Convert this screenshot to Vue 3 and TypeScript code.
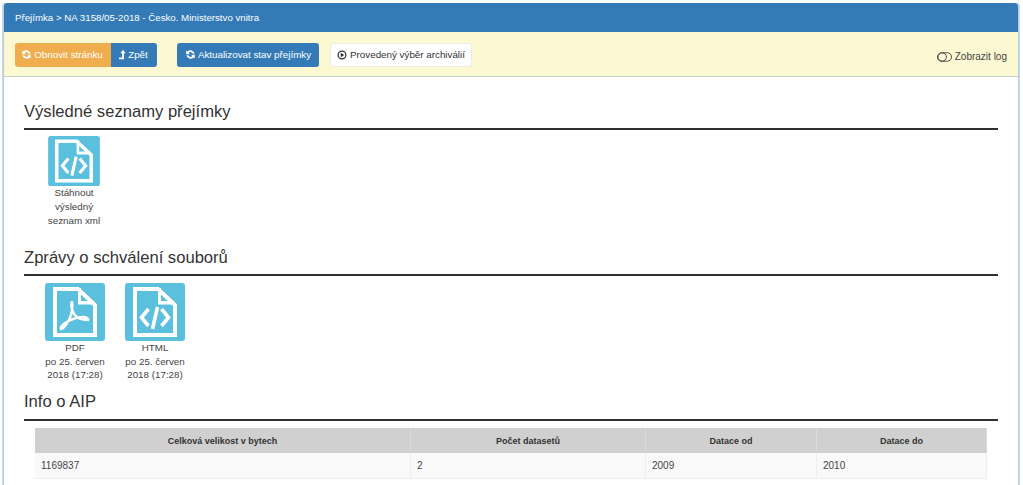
<template>
  <div class="page">
    <div class="panel">
      <div class="panel-head">Přejímka &gt; NA 3158/05-2018 - Česko. Ministerstvo vnitra</div>
      <div class="toolbar">
        <div class="btn-group">
          <button class="btn orange">
            <svg class="ico" viewBox="0 0 16 16"><path d="M14 6.800A6.200 6.200 0 0 0 3.500 3.800L1.800 2.200v5.400h5.400L5.300 5.700a3.700 3.700 0 0 1 6.100 1.100zM2 9.200a6.200 6.200 0 0 0 10.500 3l1.700 1.600V8.400H8.800l1.900 1.900a3.700 3.700 0 0 1-6.100-1.100z" fill="currentColor"/></svg>Obnovit stránku
          </button>
          <button class="btn blue back">
            <svg class="ico small" viewBox="0 0 12 16"><path d="M7.500 1 11.500 6H9v9H1.500v-2.400h4.600V6H3.500z" fill="currentColor"/></svg>Zpět
          </button>
        </div>
        <button class="btn blue update">
          <svg class="ico" viewBox="0 0 16 16"><path d="M14 6.800A6.200 6.200 0 0 0 3.500 3.800L1.800 2.200v5.400h5.400L5.300 5.700a3.700 3.700 0 0 1 6.100 1.100zM2 9.200a6.200 6.200 0 0 0 10.500 3l1.700 1.600V8.400H8.800l1.900 1.900a3.700 3.700 0 0 1-6.100-1.100z" fill="currentColor"/></svg>Aktualizovat stav přejímky
        </button>
        <button class="btn plain">
          <svg class="ico" viewBox="0 0 16 16"><circle cx="8" cy="8" r="6.200" fill="none" stroke="currentColor" stroke-width="2"/><path d="M6 4.500 11.500 8 6 11.500z" fill="currentColor"/></svg>Provedený výběr archiválií
        </button>
        <div class="log">
          <svg class="toggle" viewBox="0 0 16 10"><rect x=".5" y=".5" width="15" height="9" rx="4.500" fill="none" stroke="currentColor"/><circle cx="5.500" cy="5" r="4.500" fill="none" stroke="currentColor"/></svg>
          <span>Zobrazit log</span>
        </div>
      </div>

      <div class="content">
        <h3 class="first">Výsledné seznamy přejímky</h3>
        <div class="files one">
          <div v-for="f in resultFiles" :key="f.label" class="file small-file">
            <svg class="doc" viewBox="0 0 60 58">
              <rect width="60" height="58" rx="3" fill="#5bc0de"/>
              <path :d="sheet" fill="none" stroke="#fff" stroke-width="4"/>
              <path :d="fold" fill="#fff"/>
              <path :d="code" fill="none" stroke="#fff" stroke-width="3.600"/>
            </svg>
            <div class="label">{{ f.label }}</div>
          </div>
        </div>

        <h3>Zprávy o schválení souborů</h3>
        <div class="files two">
          <div v-for="f in reportFiles" :key="f.label" class="file">
            <svg class="doc" viewBox="0 0 60 58">
              <rect width="60" height="58" rx="3" fill="#5bc0de"/>
              <path :d="sheet" fill="none" stroke="#fff" stroke-width="4"/>
              <path :d="fold" fill="#fff"/>
              <path v-if="f.kind === 'html'" :d="code" fill="none" stroke="#fff" stroke-width="3.600"/>
              <path v-else d="M27 19c-2 1 0 8 2 12 3 4 9 6 14 6 1-1-1-3-5-3-6 0-13 3-18 6-3 2-5 5-4 6 3 0 8-8 10-14 1-5 2-12 1-13z" fill="none" stroke="#fff" stroke-width="2.400"/>
            </svg>
            <div class="label">{{ f.label }}<br />{{ f.date }}</div>
          </div>
        </div>

        <h3 class="aip">Info o AIP</h3>
        <table>
          <thead>
            <tr>
              <th v-for="c in columns" :key="c.title" :style="{ width: c.width + 'px' }">{{ c.title }}</th>
            </tr>
          </thead>
          <tbody>
            <tr>
              <td v-for="c in columns" :key="c.title">{{ c.value }}</td>
            </tr>
          </tbody>
        </table>
      </div>
    </div>
  </div>
</template>

<script setup lang="ts">
const sheet = 'M10 6h23l17 16v30H10z'
const fold = 'M33 5h3v13h13l2 3.500H33z'
const code = 'M23.500 26l-7 8.500 7 8.500M36.500 26l7 8.500-7 8.500M32.500 24l-5 22'

const resultFiles = [{ label: 'Stáhnout výsledný seznam xml' }]

const reportFiles = [
  { kind: 'pdf', label: 'PDF', date: 'po 25. červen 2018 (17:28)' },
  { kind: 'html', label: 'HTML', date: 'po 25. červen 2018 (17:28)' }
]

const columns = [
  { title: 'Celková velikost v bytech', value: '1169837', width: 375 },
  { title: 'Počet datasetů', value: '2', width: 234 },
  { title: 'Datace od', value: '2009', width: 170 },
  { title: 'Datace do', value: '2010', width: 169 }
]
</script>

<style>
html, body {
  background: #fff;
  overflow: hidden;
}
</style>

<style scoped>
.page {
  height: 485px;
  overflow: hidden;
  padding: 3px 4px 0 3px;
  box-sizing: border-box;
  font-family: "Liberation Sans", Arial, sans-serif;
  color: #333;
}

.panel {
  border: 1px solid #b4cde2;
  border-top: 0;
  border-radius: 3px 3px 0 0;
  height: 600px;
  box-shadow: -1px 0 0 #c9dcea, 1px 0 0 #c9dcea;
}

.panel-head {
  height: 29px;
  line-height: 29px;
  padding-left: 11px;
  background: #337ab7;
  color: #fff;
  font-size: 9.7px;
  border-radius: 3px 3px 0 0;
}

.toolbar {
  height: 45px;
  box-sizing: border-box;
  padding: 11px 11px 0;
  background: #fbf8d2;
  border-bottom: 1px solid #bfd3c8;
  display: flex;
  align-items: flex-start;
}

.btn-group {
  display: flex;
  margin-right: 20px;
}

.btn {
  height: 24px;
  border: 0;
  padding: 0 0 1px;
  font: 9.8px "Liberation Sans", Arial, sans-serif;
  display: flex;
  align-items: center;
  justify-content: center;
  color: #fff;
  border-radius: 3px;
}

.orange {
  width: 96px;
  padding-right: 2px;
  background: #f0ad4e;
  border-radius: 3px 0 0 3px;
}

.blue {
  background: #337ab7;
}

.back {
  width: 46px;
  padding-right: 2px;
  border-radius: 0 3px 3px 0;
}

.update {
  width: 142px;
  margin-right: 11px;
}

.plain {
  width: 142px;
  background: #fff;
  color: #333;
  border: 1px solid #ececec;
  box-sizing: border-box;
}

.ico {
  width: 11px;
  height: 11px;
  margin-right: 2px;
  flex: none;
}

.plain .ico {
  width: 10px;
  height: 10px;
  margin-right: 3px;
}

.ico.small {
  width: 8px;
}

.log {
  margin-left: auto;
  margin-top: 8px;
  display: flex;
  align-items: center;
  gap: 3px;
  font-size: 10px;
  color: #444;
}

.toggle {
  width: 15px;
  height: 10px;
  color: #444;
}

.content {
  padding: 0 20px;
}

h3 {
  margin: 0;
  font-size: 16.6px;
  font-weight: 400;
  line-height: 20px;
  padding: 11px 0 6px;
  border-bottom: 2px solid #2f2f2f;
}

h3.first {
  padding-top: 25px;
}

h3.aip {
  padding: 10px 0 7px;
}

.files {
  display: flex;
}

.files.one {
  padding: 6px 0 0 14px;
  height: 101px;
}

.files.two {
  padding: 7px 0 0 21px;
  gap: 20px;
  height: 99px;
}

.file {
  width: 60px;
  text-align: center;
}

.small-file {
  width: 72px;
}

.doc {
  display: block;
  width: 60px;
  height: 58px;
  margin: 0 auto;
}

.small-file .doc {
  width: 52px;
  height: 50px;
}

.label {
  font-size: 9.8px;
  line-height: 14px;
  margin: 0 -6px;
  color: #444;
}

.small-file .label {
  margin: 0 5px;
}

.two .label {
  line-height: 13.5px;
}

table {
  margin: 7px 0 0 11px;
  width: 952px;
  table-layout: fixed;
  border-collapse: collapse;
  font-size: 10px;
}

th {
  height: 25px;
  padding: 0;
  background: #d0d0d0;
  border-right: 1px solid #dadada;
  font-size: 9px;
  font-weight: 700;
  text-align: center;
}

td {
  height: 25px;
  padding: 0 6px;
  background: #f9f9f9;
  border-right: 1px solid #eee;
  border-bottom: 1px solid #eee;
  color: #444;
}
</style>
